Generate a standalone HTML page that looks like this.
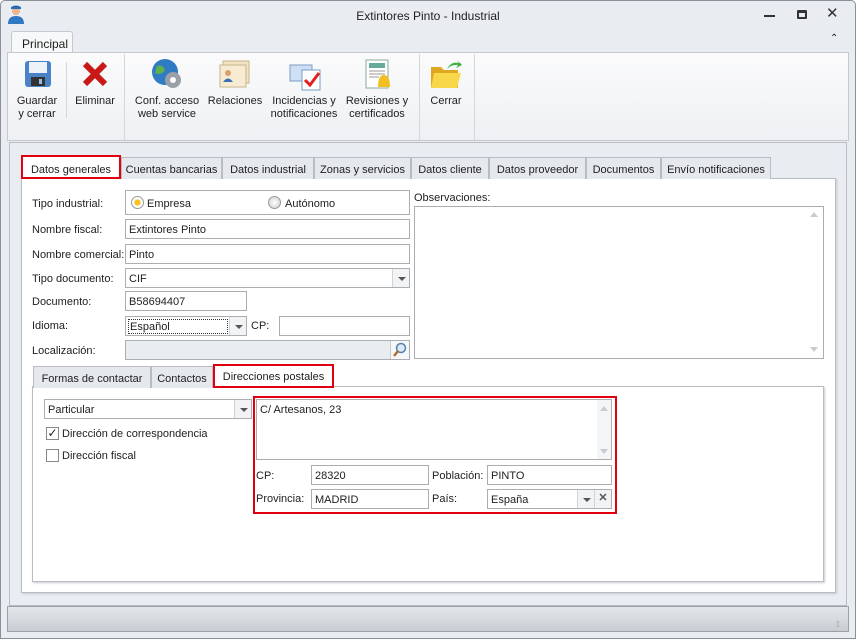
<!DOCTYPE html><html><head><meta charset="utf-8"><style>
*{box-sizing:border-box}
body{margin:0;width:856px;height:639px;overflow:hidden;font-family:"Liberation Sans",sans-serif;font-size:11px;color:#1e1e1e;background:#fff}
.a{position:absolute}
.win{left:0;top:0;width:856px;height:639px;background:#e9ecf0;border:1px solid #8a9099;border-radius:5px 5px 0 0}
.in{background:#fff;border:1px solid #abadb3;padding:4px 3px 0;white-space:nowrap;overflow:hidden}
.dis{background:#e9ecf0}
.tab{top:0;height:22px;border:1px solid #b9bdc3;border-bottom:none;background:#e5e8ec;padding:6px 0 0;white-space:nowrap;text-align:center}
.lb{white-space:nowrap;margin-top:1px}
.dd{position:absolute;right:0;top:0;bottom:0;width:17px;border-left:1px solid #d0d3d8;background:#f2f3f5}
.dd:after{content:"";position:absolute;left:5px;top:8px;border:4px solid transparent;border-top:4px solid #555;border-bottom:none}
.bt{text-align:center;line-height:13px;white-space:nowrap}
.red{border:2px solid #e00010}
.sep{width:1px;background:#d3d6db;top:54px;height:86px}
</style></head><body>
<div class="a win"></div>
<svg class="a" style="left:7px;top:5px" width="18" height="20"><circle cx="9" cy="6" r="4" fill="#e9b58c"/><path d="M4 4h10v-2q-5-3-10 0z" fill="#2a6cb4"/><path d="M1 19q0-8 8-8q8 0 8 8z" fill="#2f78c4"/></svg>
<div class="a" style="left:0;width:856px;top:9px;text-align:center;font-size:12px">Extintores Pinto - Industrial</div>
<div class="a" style="left:764px;top:15px;width:11px;height:2px;background:#333"></div>
<div class="a" style="left:797px;top:10px;width:10px;height:9px;border:2px solid #333;border-top-width:3px;border-radius:1px"></div>
<div class="a" style="left:826px;top:4px;font-size:15px;color:#333">✕</div>
<div class="a" style="left:11px;top:31px;width:62px;height:23px;background:#f7f8f9;border:1px solid #c5c9cf;border-bottom:none;border-radius:3px 3px 0 0;padding:5px 0 0 10px;font-size:12px">Principal</div>
<div class="a" style="left:830px;top:33px;font-size:10px">⌃</div>
<div class="a" style="left:7px;top:52px;width:842px;height:89px;background:linear-gradient(#fbfbfc,#eef0f3);border:1px solid #c5c9cf"></div>
<div class="a sep" style="left:124px"></div><div class="a sep" style="left:419px"></div><div class="a sep" style="left:474px"></div><div class="a sep" style="left:66px;top:62px;height:56px"></div>
<svg class="a" style="left:24px;top:60px" width="28" height="28"><rect x="1" y="1" width="26" height="26" rx="3" fill="#4a82c8"/><rect x="5" y="2" width="18" height="11" fill="#eef3f9"/><rect x="7" y="17" width="14" height="9" fill="#333"/><rect x="15" y="19" width="3" height="5" fill="#9bd"/></svg>
<svg class="a" style="left:82px;top:61px" width="26" height="26"><path d="M3 3L23 23M23 3L3 23" stroke="#c81818" stroke-width="6"/></svg>
<svg class="a" style="left:151px;top:58px" width="32" height="32"><circle cx="14" cy="14" r="13" fill="#2f7bc4"/><path d="M6 8q6-2 8 4q-4 6-10 3z" fill="#5db04a"/><circle cx="22" cy="22" r="8" fill="#9aa0a8"/><circle cx="22" cy="22" r="3" fill="#fff"/></svg>
<svg class="a" style="left:219px;top:60px" width="32" height="30"><rect x="4" y="1" width="26" height="22" fill="#f3e3c0" stroke="#c8b58c"/><rect x="1" y="5" width="26" height="22" fill="#f7ecd2" stroke="#c8b58c"/><circle cx="9" cy="13" r="3" fill="#d9a070"/><path d="M4 22q5-7 10 0z" fill="#3a6fb0"/></svg>
<svg class="a" style="left:288px;top:59px" width="34" height="32"><rect x="2" y="6" width="22" height="16" fill="#cfe0f4" stroke="#7a9cc8"/><rect x="14" y="11" width="18" height="20" fill="#fff" stroke="#7a9cc8"/><path d="M17 21l5 5l9-12" stroke="#e02020" stroke-width="3" fill="none"/></svg>
<svg class="a" style="left:362px;top:59px" width="32" height="32"><rect x="4" y="1" width="22" height="28" fill="#fff" stroke="#8a9"/><rect x="7" y="4" width="16" height="5" fill="#6a9"/><path d="M7 12h16M7 15h16M7 18h10" stroke="#999"/><path d="M16 28q0-12 6-12q6 0 6 12z" fill="#f0c020"/></svg>
<svg class="a" style="left:429px;top:59px" width="34" height="32"><path d="M2 8h10l3 3h14v18H2z" fill="#e0a820"/><path d="M5 14h27l-4 15H2z" fill="#f8d84a"/><path d="M18 10q4-8 12-6l-2-3l5 5l-6 3l2-3q-6-1-11 4z" fill="#3cb040"/></svg>
<div class="a bt" style="left:12px;top:95px;width:50px">Guardar<br>y cerrar</div>
<div class="a bt" style="left:70px;top:95px;width:50px">Eliminar</div>
<div class="a bt" style="left:130px;top:95px;width:74px">Conf. acceso<br>web service</div>
<div class="a bt" style="left:206px;top:95px;width:58px">Relaciones</div>
<div class="a bt" style="left:268px;top:95px;width:72px">Incidencias y<br>notificaciones</div>
<div class="a bt" style="left:342px;top:95px;width:70px">Revisiones y<br>certificados</div>
<div class="a bt" style="left:422px;top:95px;width:48px">Cerrar</div>
<div class="a" style="left:9px;top:142px;width:838px;height:464px;border:1px solid #b9bdc3;background:#e9ecf0"></div>
<div class="a" style="left:21px;top:178px;width:815px;height:415px;background:#fff;border:1px solid #b9bdc3;box-shadow:1px 1px 2px #c8ccd2"></div>
<div class="a" style="left:21px;top:157px;height:22px;width:800px">
<div class="a tab red" style="left:0;width:100px;background:#fff;height:24px;top:-2px;padding-top:7px">Datos generales</div>
<div class="a tab" style="left:100px;width:101px">Cuentas bancarias</div>
<div class="a tab" style="left:201px;width:92px">Datos industrial</div>
<div class="a tab" style="left:293px;width:97px">Zonas y servicios</div>
<div class="a tab" style="left:390px;width:78px">Datos cliente</div>
<div class="a tab" style="left:468px;width:97px">Datos proveedor</div>
<div class="a tab" style="left:565px;width:75px">Documentos</div>
<div class="a tab" style="left:640px;width:110px">Envío notificaciones</div>
</div>
<div class="a lb" style="left:32px;top:197px">Tipo industrial:</div>
<div class="a in" style="left:125px;top:190px;width:285px;height:25px"></div>
<div class="a" style="left:131px;top:196px;width:13px;height:13px;border-radius:50%;border:1px solid #999;background:radial-gradient(#f7c020 35%,#fff 45%)"></div>
<div class="a lb" style="left:147px;top:197px">Empresa</div>
<div class="a" style="left:268px;top:196px;width:13px;height:13px;border-radius:50%;border:1px solid #999;background:radial-gradient(#fff,#ccc)"></div>
<div class="a lb" style="left:285px;top:197px">Autónomo</div>
<div class="a lb" style="left:32px;top:223px">Nombre fiscal:</div>
<div class="a in" style="left:125px;top:219px;width:285px;height:20px">Extintores Pinto</div>
<div class="a lb" style="left:32px;top:248px">Nombre comercial:</div>
<div class="a in" style="left:125px;top:244px;width:285px;height:20px">Pinto</div>
<div class="a lb" style="left:32px;top:272px">Tipo documento:</div>
<div class="a in" style="left:125px;top:268px;width:285px;height:20px">CIF<div class="dd"></div></div>
<div class="a lb" style="left:32px;top:295px">Documento:</div>
<div class="a in" style="left:125px;top:291px;width:122px;height:20px">B58694407</div>
<div class="a lb" style="left:32px;top:319px">Idioma:</div>
<div class="a in" style="left:125px;top:316px;width:122px;height:20px;padding:2px 2px"><span style="display:block;border:1px dotted #333;width:100px;height:15px;padding-left:1px;line-height:14px">Español</span><div class="dd"></div></div>
<div class="a lb" style="left:251px;top:319px">CP:</div>
<div class="a in" style="left:279px;top:316px;width:131px;height:20px"></div>
<div class="a lb" style="left:32px;top:344px">Localización:</div>
<div class="a in dis" style="left:125px;top:340px;width:285px;height:20px"><div style="position:absolute;right:0;top:0;bottom:0;width:19px;border-left:1px solid #ccc;background:#f6f7f8"></div></div>
<svg class="a" style="left:392px;top:342px" width="16" height="16"><circle cx="9" cy="6" r="4.5" fill="#dbe9f7" stroke="#5a7fa8" stroke-width="1.5"/><path d="M6 9L2 14" stroke="#b07030" stroke-width="2.5"/></svg>
<div class="a lb" style="left:414px;top:191px">Observaciones:</div>
<div class="a in" style="left:414px;top:206px;width:410px;height:153px"></div>
<div class="a" style="left:810px;top:212px;border:4px solid transparent;border-bottom:5px solid #c8cbd0;border-top:none"></div>
<div class="a" style="left:810px;top:347px;border:4px solid transparent;border-top:5px solid #c8cbd0;border-bottom:none"></div>
<div class="a" style="left:32px;top:386px;width:792px;height:196px;border:1px solid #b9bdc3;box-shadow:1px 1px 2px #c8ccd2"></div>
<div class="a" style="left:33px;top:366px;height:22px;width:400px">
<div class="a tab" style="left:0;width:118px">Formas de contactar</div>
<div class="a tab" style="left:118px;width:62px">Contactos</div>
<div class="a tab red" style="left:180px;width:121px;background:#fff;height:24px;top:-2px;padding-top:5px">Direcciones postales</div>
</div>
<div class="a in" style="left:44px;top:399px;width:208px;height:20px">Particular<div class="dd"></div></div>
<div class="a" style="left:46px;top:427px;width:13px;height:13px;border:1px solid #888;background:#fff;font-size:12px;line-height:11px;text-align:center">✓</div>
<div class="a lb" style="left:62px;top:427px">Dirección de correspondencia</div>
<div class="a" style="left:46px;top:449px;width:13px;height:13px;border:1px solid #888;background:#fff"></div>
<div class="a lb" style="left:62px;top:449px">Dirección fiscal</div>
<div class="a red" style="left:253px;top:396px;width:364px;height:118px"></div>
<div class="a in" style="left:256px;top:399px;width:356px;height:61px">C/ Artesanos, 23</div>
<div class="a" style="left:597px;top:400px;width:14px;height:59px;background:#f4f5f6"></div>
<div class="a" style="left:600px;top:406px;border:4px solid transparent;border-bottom:5px solid #c8cbd0;border-top:none"></div>
<div class="a" style="left:600px;top:449px;border:4px solid transparent;border-top:5px solid #c8cbd0;border-bottom:none"></div>
<div class="a lb" style="left:256px;top:469px">CP:</div>
<div class="a in" style="left:311px;top:465px;width:118px;height:20px">28320</div>
<div class="a lb" style="left:432px;top:469px">Población:</div>
<div class="a in" style="left:487px;top:465px;width:125px;height:20px">PINTO</div>
<div class="a lb" style="left:256px;top:492px">Provincia:</div>
<div class="a in" style="left:311px;top:489px;width:118px;height:20px">MADRID</div>
<div class="a lb" style="left:432px;top:492px">País:</div>
<div class="a in" style="left:487px;top:489px;width:125px;height:20px">España<div class="dd" style="right:17px"></div><div style="position:absolute;right:0;top:0;bottom:0;width:17px;border-left:1px solid #d0d3d8;background:#f2f3f5;text-align:center;font-weight:bold;color:#555;line-height:17px">✕</div></div>
<div class="a" style="left:7px;top:606px;width:842px;height:26px;border:1px solid #9ca1a8;background:linear-gradient(#e4e7ea,#c9ccd1)"></div>
<div class="a" style="left:836px;top:620px;font-size:8px;color:#999;letter-spacing:-1px">⁞⁞</div>
</body></html>
